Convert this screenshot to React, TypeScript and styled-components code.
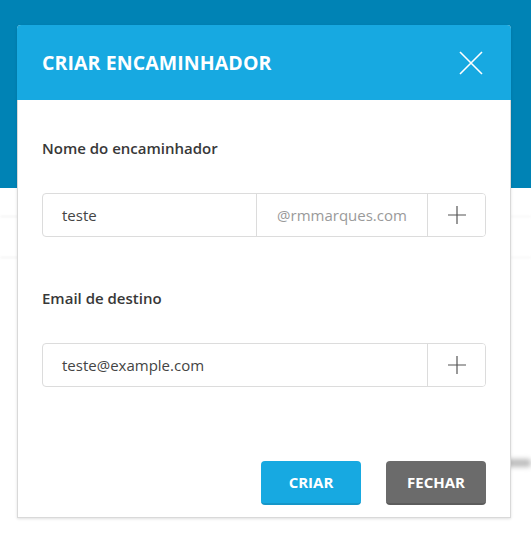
import React from "react"
import styled, { createGlobalStyle } from "styled-components"

const GlobalStyle = createGlobalStyle`
  html, body {
    margin: 0;
    padding: 0;
    background: #ffffff;
    font-family: "Open Sans", "Liberation Sans", sans-serif;
  }
`

const Page = styled.div`
  position: relative;
  width: 531px;
  height: 548px;
  overflow: hidden;
  background: #ffffff;
`

const Hero = styled.div`
  height: 188px;
  background: #0083b5;
`

const BlurRow = styled.div<{ $gap: number }>`
  height: 1px;
  margin-top: ${(p) => p.$gap}px;
  background: linear-gradient(to right, #eeeeee, #f3f3f3);
  filter: blur(1px);
`

// blurred, unreadable word of the page behind the dialog
const GhostSmudge = styled.div`
  position: absolute;
  top: 459px;
  right: 0;
  width: 24px;
  height: 8px;
  background: #bdbdbd;
  border-radius: 3px;
  filter: blur(2.5px);
`

const Modal = styled.div`
  position: absolute;
  top: 25px;
  left: 17px;
  width: 494px;
  height: 493px;
  display: flex;
  flex-direction: column;
  background: #fff;
  border: 1px solid #d9d9d9;
  border-top: none;
  border-radius: 4px 4px 0 0;
  box-sizing: border-box;
  box-shadow: 0 1px 3px rgba(0, 0, 0, 0.12);
`

const Header = styled.div`
  height: 75px;
  display: flex;
  align-items: center;
  justify-content: space-between;
  padding: 0 28px 0 25px;
  background: #17a9e1;
  border-radius: 4px 4px 0 0;
  margin: 0 -1px;
`

const Title = styled.h2`
  margin: 0;
  font-size: 19.5px;
  font-weight: 700;
  color: #fff;
  letter-spacing: 0.1px;
`

const CloseButton = styled.button`
  display: flex;
  padding: 0;
  border: none;
  background: none;
  cursor: pointer;
`

const Body = styled.div`
  flex: 1;
  display: flex;
  flex-direction: column;
  padding: 36px 24px 12px;
`

const Label = styled.label`
  display: block;
  font-size: 15px;
  font-weight: 600;
  line-height: 24px;
  color: #383838;
`

const Group = styled.div<{ $last?: boolean }>`
  display: flex;
  height: 44px;
  margin: 33px 0 ${(p) => (p.$last ? 0 : 49)}px;
  border: 1px solid #dcdcdc;
  border-radius: 4px;
  box-sizing: border-box;
  overflow: hidden;
`

const Field = styled.div`
  flex: 1;
  display: flex;
  align-items: center;
  padding: 0 19px;
  font-size: 15px;
  color: #444;
`

const Suffix = styled.div`
  width: 170px;
  display: flex;
  align-items: center;
  justify-content: center;
  border-left: 1px solid #dcdcdc;
  font-size: 15px;
  color: #9a9a9a;
`

const AddButton = styled.button`
  width: 58px;
  display: flex;
  align-items: center;
  justify-content: center;
  padding: 0;
  border: none;
  border-left: 1px solid #dcdcdc;
  background: #fff;
  cursor: pointer;
`

const Footer = styled.div`
  margin-top: auto;
  display: flex;
  justify-content: flex-end;
  gap: 25px;
`

const Button = styled.button<{ $tone: string; $edge: string }>`
  width: 100px;
  height: 44px;
  border: none;
  border-bottom: 2px solid ${(p) => p.$edge};
  border-radius: 4px;
  background: ${(p) => p.$tone};
  color: #fff;
  font-family: inherit;
  font-size: 15px;
  font-weight: 700;
  cursor: pointer;
`

const Plus = () => (
  <svg width="20" height="20" viewBox="0 0 20 20">
    <path d="M10 1v18M1 10h18" stroke="#555" strokeWidth="1.2" fill="none" />
  </svg>
)

const Cross = () => (
  <svg width="24" height="24" viewBox="0 0 24 24">
    <path d="M1 1l22 22M23 1L1 23" stroke="#fff" strokeWidth="1.6" fill="none" />
  </svg>
)

const App = () => (
  <Page>
    <GlobalStyle />
    <Hero />
    <BlurRow $gap={28} />
    <BlurRow $gap={40} />
    <GhostSmudge />
    <Modal>
      <Header>
        <Title>CRIAR ENCAMINHADOR</Title>
        <CloseButton aria-label="Fechar">
          <Cross />
        </CloseButton>
      </Header>
      <Body>
        <Label>Nome do encaminhador</Label>
        <Group>
          <Field>teste</Field>
          <Suffix>@rmmarques.com</Suffix>
          <AddButton aria-label="Adicionar">
            <Plus />
          </AddButton>
        </Group>
        <Label>Email de destino</Label>
        <Group $last>
          <Field>teste@example.com</Field>
          <AddButton aria-label="Adicionar">
            <Plus />
          </AddButton>
        </Group>
        <Footer>
          <Button $tone="#17a9e1" $edge="#1596c8">CRIAR</Button>
          <Button $tone="#6b6b6b" $edge="#5c5c5c">FECHAR</Button>
        </Footer>
      </Body>
    </Modal>
  </Page>
)

export default App
